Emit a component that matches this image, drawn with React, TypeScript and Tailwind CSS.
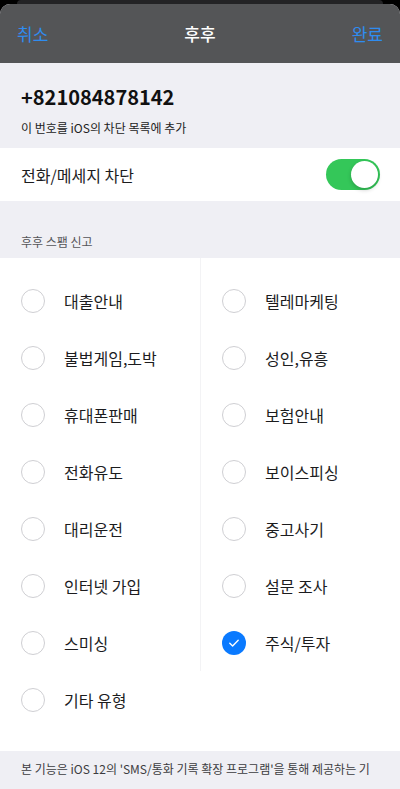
const LEFT = ["대출안내", "불법게임,도박", "휴대폰판매", "전화유도", "대리운전", "인터넷 가입", "스미싱", "기타 유형"];
const RIGHT = ["텔레마케팅", "성인,유흥", "보험안내", "보이스피싱", "중고사기", "설문 조사", "주식/투자"];

function Radio({ checked }: { checked?: boolean }) {
  if (checked) {
    return (
      <span className="flex h-[24px] w-[24px] shrink-0 items-center justify-center rounded-full bg-[#0a7aff]">
        <svg width="12" height="12" viewBox="0 0 12 12" fill="none">
          <path d="M1.8 6.3 L4.6 9 L10.2 3.2" stroke="white" strokeWidth="1.4" strokeLinecap="round" strokeLinejoin="round" />
        </svg>
      </span>
    );
  }
  return <span className="h-[24px] w-[24px] shrink-0 rounded-full border border-[#cfcfd3] bg-white" />;
}

function Item({ label, checked }: { label: string; checked?: boolean }) {
  return (
    <div className="flex h-[57px] items-center gap-[19px] px-[21px]">
      <Radio checked={checked} />
      <span className="text-[16px] text-[#1c1c1e]">{label}</span>
    </div>
  );
}

export default function App() {
  return (
    <div
      className="flex h-[789px] w-[400px] flex-col overflow-hidden bg-black"
      style={{ fontFamily: '"Noto Sans CJK KR", "Noto Sans", sans-serif' }}
    >
      <div className="h-[4px] px-[17px]">
        <div className="h-full rounded-t-[8px] bg-[#232325]" />
      </div>
      <div className="flex flex-1 flex-col overflow-hidden rounded-t-[10px] bg-[#efeff4]">
        <div className="flex h-[59px] shrink-0 items-center justify-between bg-[#545557] px-[17px] text-[17px]">
          <span className="text-[#2f8cf0]">취소</span>
          <span className="font-medium text-white">후후</span>
          <span className="text-[#2f8cf0]">완료</span>
        </div>

        <div className="px-[21px] pt-[20px] pb-[12px]">
          <div className="text-[20px] font-bold leading-[28px] text-[#111]">+821084878142</div>
          <div className="mt-[9px] text-[12px] leading-[16px] text-[#222]">이 번호를 iOS의 차단 목록에 추가</div>
        </div>

        <div className="flex h-[53px] shrink-0 items-center justify-between bg-white pl-[21px] pr-[20px]">
          <span className="text-[16px] text-[#1c1c1e]">전화/메세지 차단</span>
          <span className="flex h-[31px] w-[54px] items-center justify-end rounded-full bg-[#34c759] pr-[2px]">
            <span className="h-[27px] w-[27px] rounded-full bg-white shadow-[0_2px_4px_rgba(0,0,0,0.2)]" />
          </span>
        </div>

        <div className="flex h-[57px] shrink-0 items-end px-[21px] pb-[7px]">
          <span className="text-[12px] text-[#555558]">후후 스팸 신고</span>
        </div>

        <div className="flex shrink-0 bg-white pb-[23px]">
          <div className="w-[200px] pt-[14px]">
            {LEFT.map((l) => (
              <Item key={l} label={l} />
            ))}
          </div>
          <div className="w-[200px] self-start border-l border-[#f3f3f5] pt-[14px]">
            {RIGHT.map((l) => (
              <Item key={l} label={l} checked={l === "주식/투자"} />
            ))}
          </div>
        </div>

        <div className="whitespace-nowrap px-[21px] pt-[9px] text-[12px] text-[#3c3c40]">
          본 기능은 iOS 12의 'SMS/통화 기록 확장 프로그램'을 통해 제공하는 기
        </div>
      </div>
    </div>
  );
}
